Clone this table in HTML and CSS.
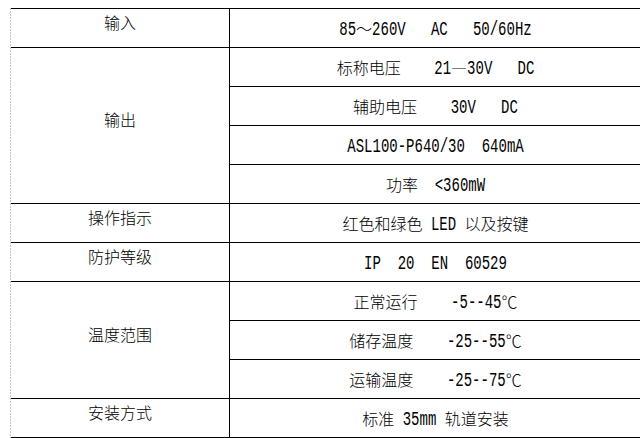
FILE: index.html
```html
<!DOCTYPE html>
<html lang="zh-CN">
<head>
<meta charset="utf-8">
<title>参数表</title>
<link rel="stylesheet" href="styles.css">
</head>
<body>
<div class="frame">
  <div class="grid">
    <div class="k">输入</div>
    <div class="v"><span class="l">85</span>～<span class="l">260V   AC   50/60Hz</span></div>
    <div class="k span4">输出</div>
    <div class="v">标称电压<span class="l">    21</span>—<span class="l">30V   DC</span></div>
    <div class="v">辅助电压<span class="l">    30V   DC</span></div>
    <div class="v"><span class="l">ASL100-P640/30  640mA</span></div>
    <div class="v">功率<span class="l">  &lt;360mW</span></div>
    <div class="k">操作指示</div>
    <div class="v">红色和绿色<span class="l"> LED </span>以及按键</div>
    <div class="k">防护等级</div>
    <div class="v"><span class="l">IP  20  EN  60529</span></div>
    <div class="k span3">温度范围</div>
    <div class="v">正常运行<span class="l">    -5--45</span>℃</div>
    <div class="v">储存温度<span class="l">    -25--55</span>℃</div>
    <div class="v">运输温度<span class="l">    -25--75</span>℃</div>
    <div class="k">安装方式</div>
    <div class="v">标准<span class="l"> 35mm </span>轨道安装</div>
  </div>
</div>
</body>
</html>
```
FILE: styles.css
```css
html, body {
  margin: 0;
  padding: 0;
  background: #fff;
  overflow: hidden;
}

.frame {
  margin: 8px 0 0 10px;
  padding-left: 1px;
  width: 630px;
  background: repeating-linear-gradient(to bottom, #c6c6c6 0 2px, transparent 2px 3px) left top / 1px 100% no-repeat;
}

.grid {
  display: grid;
  grid-template-columns: 218px 411px;
  grid-auto-rows: 38px;
  gap: 1px;
  background: #000;
  border-top: 1px solid #000;
  border-bottom: 1px solid #000;
  font-family: "Noto Sans CJK SC", sans-serif;
  font-weight: 300;
  font-size: 16px;
  color: #000;
}

.k {
  grid-column: 1;
  background: #fff;
  display: flex;
  align-items: center;
  justify-content: center;
  padding-bottom: 13px;
  line-height: 20px;
}

.span4 { grid-row: span 4; }
.span3 { grid-row: span 3; }

.v {
  grid-column: 2;
  background: #fff;
  text-align: center;
  line-height: 38px;
  white-space: pre;
}

.l {
  display: inline-block;
  font-family: "Liberation Mono", monospace;
  font-weight: 400;
  font-size: 14px;
  line-height: 14px;
  white-space: pre;
  transform: scaleY(1.45);
  transform-origin: 50% 10.7px;
}
```
